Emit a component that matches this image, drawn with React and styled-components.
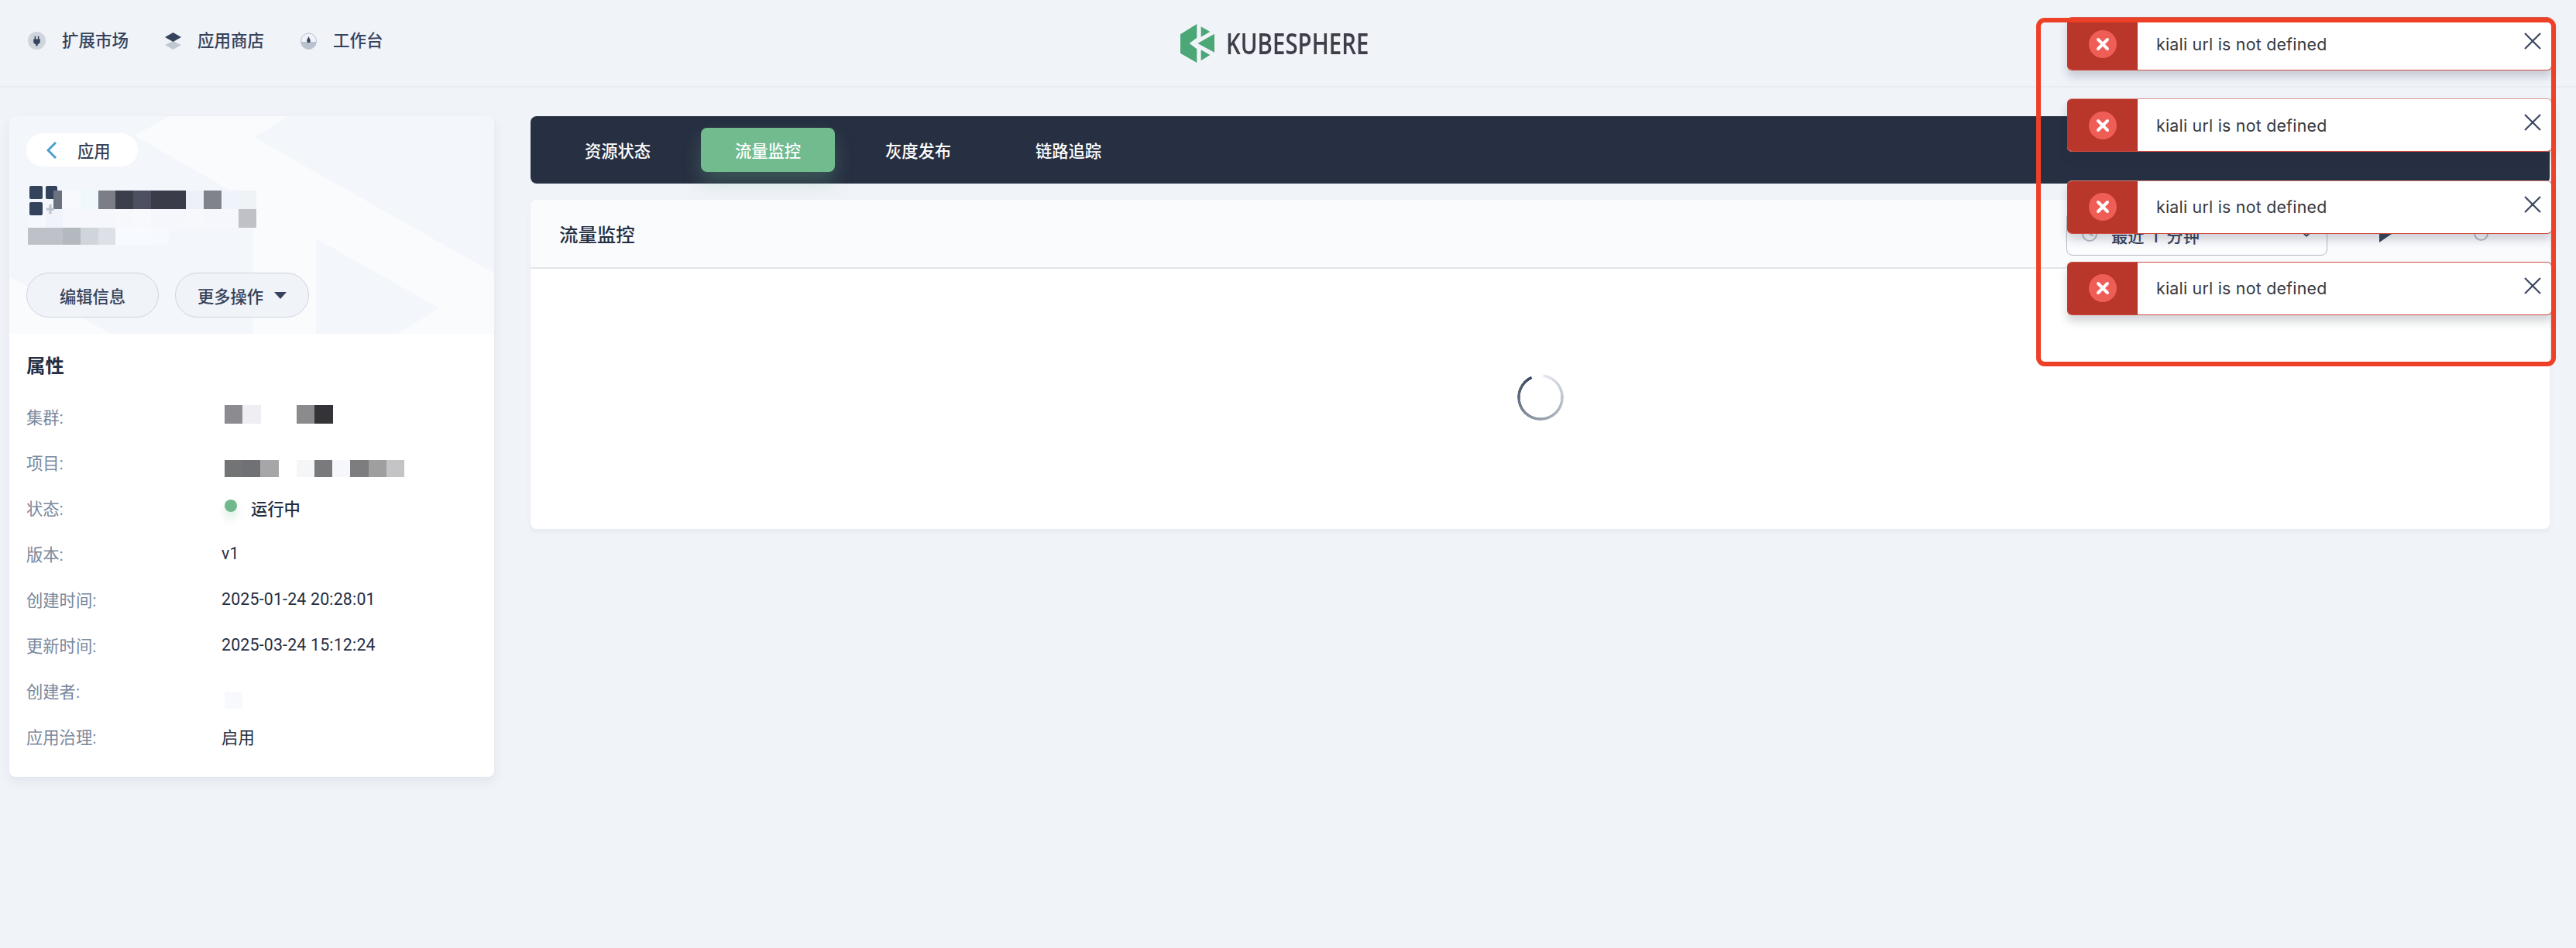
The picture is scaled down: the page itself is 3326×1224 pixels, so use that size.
import React from 'react';
import styled, { createGlobalStyle } from 'styled-components';
import { History, ChevronDown } from 'lucide-react';

const Global = createGlobalStyle`
  html, body { margin: 0; padding: 0; background: #f0f3f8; }
  body { font-family: Roboto, "Noto Sans CJK SC", sans-serif; color: #242e42; }
  * { box-sizing: border-box; }
  #root { position: relative; width: 3326px; height: 1224px; overflow: hidden; }
`;

const Page = styled.div`
  width: 3326px;
  height: 1224px;
  background: #f0f3f8;
`;

const Header = styled.header`
  height: 113px;
  border-bottom: 2px solid #e8ebf2;
  display: grid;
  grid-template-columns: 1524px auto 1fr;
  align-items: center;
  padding-bottom: 6px;
`;

const Nav = styled.nav`
  display: flex;
  align-items: center;
  padding-left: 36px;
  gap: 47px;
`;

const NavItem = styled.div`
  display: flex;
  align-items: center;
  gap: 21px;
  font-size: 21.5px;
  font-weight: 500;
  color: #36435c;
  line-height: 24px;
`;

const LogoWrap = styled.div`
  display: flex;
  align-items: center;
  gap: 15px;
  margin-top: 6px;
`;

const LogoText = styled.span`
  display: block;
  width: 183px;
  font-family: "Open Sans", sans-serif;
  font-size: 37px;
  line-height: 50px;
  font-weight: 600;
  color: #3e3d49;
  white-space: nowrap;
  transform: scaleX(0.795);
  transform-origin: left center;
`;

const Body = styled.div`
  display: flex;
  align-items: flex-start;
  gap: 47px;
  padding: 37px 34px 0 12px;
`;

const Side = styled.aside`
  width: 626px;
  flex: none;
  background: #fff;
  border-radius: 8px;
  box-shadow: 0 6px 14px rgba(36, 46, 66, 0.07);
  overflow: hidden;
`;

const Hero = styled.div`
  position: relative;
  height: 281px;
  padding: 22px;
  background: #f3f6fb;
`;

const HeroShape = styled.svg`
  position: absolute;
  left: 0;
  top: 0;
`;

const HeroContent = styled.div`
  position: relative;
  display: flex;
  flex-direction: column;
  align-items: flex-start;
`;

const BackPill = styled.div`
  width: 144px;
  height: 43px;
  border-radius: 22px;
  background: #fff;
  display: flex;
  align-items: center;
  gap: 27px;
  padding-left: 26px;
  font-size: 21.3px;
  color: #36435c;
  font-weight: 500;
`;

const TitleBlock = styled.div`
  position: relative;
  margin: 31px 0 36px 2px;
  height: 70px;
`;

const TitleIcon = styled.svg`
  position: absolute;
  left: 2px;
  top: -6px;
`;

const MosaicRow = styled.div`
  display: flex;
  height: ${(p) => p.$h}px;
  margin-top: ${(p) => p.$shift || 0}px;
`;

const MosaicCell = styled.span`
  display: block;
  width: ${(p) => p.$w}px;
  height: 100%;
  background: ${(p) => p.$c || 'transparent'};
`;

const Actions = styled.div`
  display: flex;
  gap: 21px;
`;

const PillButton = styled.div`
  width: ${(p) => p.$w}px;
  height: 58px;
  border-radius: 29px;
  border: 1.5px solid #cfd4de;
  background: #f0f3f8;
  display: flex;
  align-items: center;
  justify-content: center;
  gap: 14px;
  font-size: 21.3px;
  font-weight: 500;
  color: #36435c;
`;

const Caret = styled.span`
  width: 0;
  height: 0;
  border-left: 8.5px solid transparent;
  border-right: 8.5px solid transparent;
  border-top: 9px solid #36435c;
`;

const Props = styled.section`
  padding: 24px 22px 23px;
`;

const PropsTitle = styled.h3`
  margin: 0 0 17px;
  font-size: 24.4px;
  line-height: 36px;
  font-weight: 700;
  color: #242e42;
`;

const PropRow = styled.div`
  height: 59px;
  display: flex;
  align-items: center;
  font-size: 21.3px;
`;

const PropLabel = styled.div`
  width: 252px;
  color: #79879c;
`;

const PropValue = styled.div`
  display: flex;
  align-items: center;
  color: #242e42;
  letter-spacing: 0.2px;
  padding-left: ${(p) => p.$pad || 0}px;
`;

const StatusDot = styled.span`
  width: 16px;
  height: 16px;
  border-radius: 50%;
  background: #6fb98c;
  margin: -6px 18px 0 2px;
  box-shadow: 0 8px 12px rgba(111, 185, 140, 0.25);
`;

const StatusText = styled.span`
  font-weight: 500;
  letter-spacing: 0;
`;

const Main = styled.main`
  flex: 1;
  min-width: 0;
  display: flex;
  flex-direction: column;
  gap: 21px;
`;

const TabBar = styled.div`
  height: 87px;
  background: #272f42;
  border-radius: 8px;
  padding-left: 26px;
  display: flex;
  align-items: center;
  gap: 21px;
`;

const Tab = styled.div`
  width: 173px;
  height: 57px;
  border-radius: 8px;
  display: flex;
  align-items: center;
  justify-content: center;
  color: #fff;
  font-size: 21.3px;
  font-weight: 500;
  background: ${(p) => (p.$active ? '#71bb8f' : 'transparent')};
  box-shadow: ${(p) => (p.$active ? '0 14px 24px rgba(113, 187, 143, 0.28)' : 'none')};
`;

const Card = styled.section`
  background: #fff;
  border-radius: 8px;
  box-shadow: 0 4px 8px rgba(36, 46, 66, 0.04);
  overflow: hidden;
`;

const CardHead = styled.div`
  height: 89px;
  padding: 0 79px 0 37px;
  background: #fafbfd;
  border-bottom: 2px solid #e3e5ea;
  display: flex;
  align-items: center;
`;

const CardTitle = styled.h2`
  margin: 0 auto 0 0;
  font-size: 24.4px;
  font-weight: 500;
  color: #242e42;
`;

const Select = styled.div`
  width: 337px;
  height: 57px;
  border: 1.5px solid #b0b7c4;
  border-radius: 8px;
  background: #fbfcfe;
  display: flex;
  align-items: center;
  padding: 0 15px 0 17px;
  gap: 16px;
  font-size: 21.3px;
  font-weight: 500;
  color: #36435c;
`;

const SelectText = styled.span`
  flex: 1;
  padding-top: 4px;
  word-spacing: 3px;
`;

const Play = styled.span`
  width: 0;
  height: 0;
  margin: 0 106px 0 67px;
  border-top: 11px solid transparent;
  border-bottom: 11px solid transparent;
  border-left: 16px solid #36435c;
`;

const Ring = styled.span`
  width: 19px;
  height: 19px;
  border-radius: 50%;
  border: 2px solid #b5bcc9;
`;

const CardBody = styled.div`
  height: 336px;
  display: flex;
  align-items: center;
  justify-content: center;
`;

const Spinner = styled.div`
  width: 60px;
  height: 60px;
  margin-top: -4px;
  border-radius: 50%;
  background: conic-gradient(from 0deg, #fff 0deg, #fff 6deg, #e4e8ee 8deg, #aeb5c0 130deg, #7d8796 230deg, #36435c 335deg, #fff 337deg, #fff 360deg);
  -webkit-mask: radial-gradient(circle, transparent 26px, #000 26.5px);
  mask: radial-gradient(circle, transparent 26px, #000 26.5px);
`;

const ToastStack = styled.div`
  position: absolute;
  top: 22px;
  left: 2669px;
  width: 626px;
  display: flex;
  flex-direction: column;
  gap: 36.33px;
  z-index: 5;
`;

const Toast = styled.div`
  height: 69px;
  display: flex;
  align-items: stretch;
  background: #fff;
  border: 1px solid ${(p) => p.$edge};
  border-left: none;
  border-bottom-color: #cf4a3e;
  border-radius: 6px;
  overflow: hidden;
  box-shadow: 0 8px 12px rgba(36, 46, 66, 0.2);
`;

const ToastIcon = styled.div`
  width: 91px;
  flex: none;
  margin: -1px 0;
  background: #b8362a;
  display: flex;
  align-items: center;
  justify-content: center;
`;

const ToastDisc = styled.span`
  width: 36px;
  height: 36px;
  border-radius: 50%;
  background: #ef5d57;
  display: flex;
  align-items: center;
  justify-content: center;
`;

const ToastText = styled.div`
  flex: 1;
  padding-left: 24px;
  display: flex;
  align-items: center;
  font-family: Inter, sans-serif;
  font-size: 21.3px;
  letter-spacing: 0.25px;
  color: #36383f;
`;

const ToastClose = styled.svg`
  flex: none;
  margin: 19px 13px 0 0;
`;

const Annotation = styled.div`
  position: absolute;
  left: 2629px;
  top: 23px;
  width: 671px;
  height: 450px;
  border: 6px solid #ee4027;
  border-radius: 11px;
  z-index: 6;
  pointer-events: none;
`;

const Mosaic = ({ cells, h, w = 23, shift }) => (
  <MosaicRow $h={h} $shift={shift}>
    {cells.map((c, i) => (
      <MosaicCell key={i} $c={c} $w={w} />
    ))}
  </MosaicRow>
);

const PlugIcon = () => (
  <svg width="23" height="23" viewBox="0 0 24 24">
    <circle cx="12" cy="12" r="12" fill="#d0d5dd" />
    <path d="M9 6h1.6v4h2.8V6H15v4h1.5v3.2c0 2-1.3 3.3-3.2 3.6V19h-2.6v-2.2c-1.9-.3-3.2-1.6-3.2-3.6V10H9z" fill="#36435c" />
  </svg>
);

const LayersIcon = () => (
  <svg width="21" height="22" viewBox="0 0 21 22">
    <path d="M10.5 11 21 16 10.5 22 0 16z" fill="#c0c8d2" />
    <path d="M10.5 0 21 6 10.5 12 0 6z" fill="#36435c" />
  </svg>
);

const GaugeIcon = () => (
  <svg width="21" height="22" viewBox="0 0 21 22">
    <circle cx="10.5" cy="11" r="10" fill="#eff2f8" stroke="#b9c2cd" strokeWidth="1" />
    <path d="M.5 12h20a10 10 0 0 1-20 0z" fill="#b9c2cd" />
    <path d="M10.5 5c1 2.600 2.300 4 2.300 6a2.300 2.300 0 0 1-4.600 0c0-2 1.300-3.400 2.300-6z" fill="#36435c" />
  </svg>
);

const Logo = () => (
  <svg width="44" height="50" viewBox="133 55 132 150">
    <path d="M197 55 133 95v73l64 37v-53l-29-22 29-22z" fill="#4ba776" />
    <path d="M213 65l35 20-35 20zM265 93v72l-65-35zM213 155l35 20-35 22z" fill="#4ba776" />
  </svg>
);

const rows1 = [null, null, '#f7f9fd', '#eef8fd', '#7b7e87', '#3b3e4b', '#4d5060', '#3a3d49', '#3a3d49', '#eef0f9', '#81838c', '#eef3fc', '#f0f3f5'];
const rows2 = ['#f5f8fd', '#f1f3fb', '#f5f7fc', '#f5f7fc', '#f5f7fc', '#f7f8fc', '#f7f9fd', '#f5f7fc', '#f5f7fc', '#f7f8fc', '#f5f7fc', '#f5f7fc', '#c0c1c6'];
const rows3 = ['#bfc1c8', '#bfc1c8', '#b4b9c0', '#d0d5dc', '#dde0e7', '#f7faff', '#f7faff', '#f6f9fe'];

const tabs = ['资源状态', '流量监控', '灰度发布', '链路追踪'];

const ToastCross = () => (
  <svg width="18" height="18" viewBox="0 0 18 18">
    <path d="M3 3l12 12M15 3 3 15" stroke="#fff" strokeWidth="4" strokeLinecap="round" />
  </svg>
);

const CloseIcon = () => (
  <ToastClose width="22" height="22" viewBox="0 0 22 22">
    <path d="M1 1l20 20M21 1 1 21" stroke="#3b4760" strokeWidth="2.2" fill="none" />
  </ToastClose>
);

const edges = ['#d6584d', '#e39a95', '#d9867f', '#cf4a3e'];

export default function App() {
  return (
    <Page>
      <Global />
      <Header>
        <Nav>
          <NavItem><PlugIcon />扩展市场</NavItem>
          <NavItem><LayersIcon />应用商店</NavItem>
          <NavItem><GaugeIcon />工作台</NavItem>
        </Nav>
        <LogoWrap>
          <Logo />
          <LogoText>KUBESPHERE</LogoText>
        </LogoWrap>
      </Header>
      <Body>
        <Side>
          <Hero>
            <HeroShape width="626" height="281" viewBox="12 150 626 281">
              <path d="M219 150h154l-45 27 310 176v78H513l54-33-159-90v123h-81V263L174 175z" fill="#fafbfd" />
              <path d="M12 357l131 74H12z" fill="#fafbfd" />
            </HeroShape>
            <HeroContent>
              <BackPill>
                <svg width="13" height="22" viewBox="0 0 13 22">
                  <path d="M12 1 2 11 12 21" fill="none" stroke="#4a9fd0" strokeWidth="3" />
                </svg>
                应用
              </BackPill>
              <TitleBlock>
                <Mosaic cells={rows1} h={24} w={22.7} />
                <Mosaic cells={rows2} h={24} w={22.7} />
                <Mosaic cells={rows3} h={22} w={22.7} />
                <TitleIcon width="44" height="40" viewBox="0 0 44 40">
                  <rect x="0" y="0" width="17" height="17" rx="2" fill="#33435c" />
                  <rect x="21" y="0" width="15" height="17" rx="2" fill="#33435c" />
                  <rect x="0" y="21" width="17" height="17" rx="2" fill="#33435c" />
                  <path d="M31 6h11v24H31z" fill="#6b7280" />
                  <path d="M27 24v12M22 30h10" stroke="#b9c2cd" strokeWidth="3" />
                </TitleIcon>
              </TitleBlock>
              <Actions>
                <PillButton $w={171}>编辑信息</PillButton>
                <PillButton $w={173}>更多操作<Caret /></PillButton>
              </Actions>
            </HeroContent>
          </Hero>
          <Props>
            <PropsTitle>属性</PropsTitle>
            <PropRow>
              <PropLabel>集群:</PropLabel>
              <PropValue $pad={4}>
                <Mosaic h={24} shift={-6} w={23.300} cells={['#8c8b90', '#eeeef3', null, null, '#8b8b8d', '#333338']} />
              </PropValue>
            </PropRow>
            <PropRow>
              <PropLabel>项目:</PropLabel>
              <PropValue $pad={4}>
                <Mosaic h={22} shift={16} w={23.200} cells={['#737476', '#707174', '#a6a6a8', null, '#f5f6f8', '#7a7a7c', '#f6f7fb', '#7d7d7f', '#9f9f9f', '#c4c4c6']} />
              </PropValue>
            </PropRow>
            <PropRow>
              <PropLabel>状态:</PropLabel>
              <PropValue $pad={2}><StatusDot /><StatusText>运行中</StatusText></PropValue>
            </PropRow>
            <PropRow>
              <PropLabel>版本:</PropLabel>
              <PropValue>v1</PropValue>
            </PropRow>
            <PropRow>
              <PropLabel>创建时间:</PropLabel>
              <PropValue>2025-01-24 20:28:01</PropValue>
            </PropRow>
            <PropRow>
              <PropLabel>更新时间:</PropLabel>
              <PropValue>2025-03-24 15:12:24</PropValue>
            </PropRow>
            <PropRow>
              <PropLabel>创建者:</PropLabel>
              <PropValue $pad={4}>
                <Mosaic h={21} shift={26} w={23} cells={['#f8f9fc']} />
              </PropValue>
            </PropRow>
            <PropRow>
              <PropLabel>应用治理:</PropLabel>
              <PropValue>启用</PropValue>
            </PropRow>
          </Props>
        </Side>
        <Main>
          <TabBar>
            {tabs.map((t, i) => (
              <Tab key={t} $active={i === 1}>{t}</Tab>
            ))}
          </TabBar>
          <Card>
            <CardHead>
              <CardTitle>流量监控</CardTitle>
              <Select>
                <History size={24} color="#b5bcc9" strokeWidth={2} />
                <SelectText>最近 1 分钟</SelectText>
                <ChevronDown size={22} color="#36435c" strokeWidth={2} />
              </Select>
              <Play />
              <Ring />
            </CardHead>
            <CardBody>
              <Spinner />
            </CardBody>
          </Card>
        </Main>
      </Body>
      <ToastStack>
        {edges.map((e, i) => (
          <Toast key={i} $edge={e}>
            <ToastIcon>
              <ToastDisc><ToastCross /></ToastDisc>
            </ToastIcon>
            <ToastText>kiali url is not defined</ToastText>
            <CloseIcon />
          </Toast>
        ))}
      </ToastStack>
      <Annotation />
    </Page>
  );
}
